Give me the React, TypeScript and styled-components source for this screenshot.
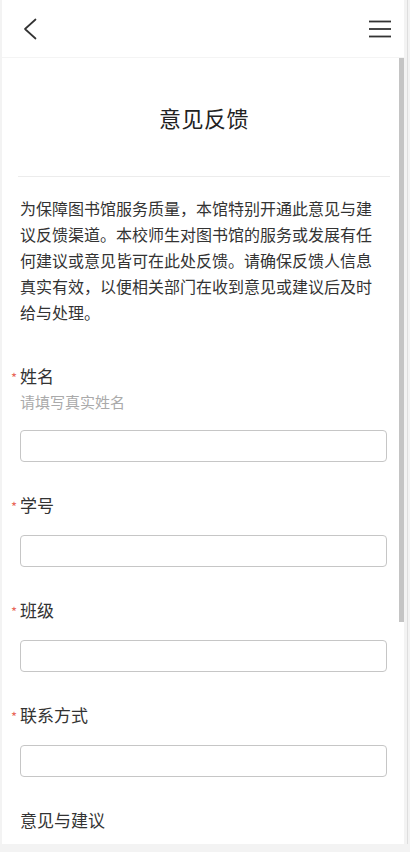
import React from 'react'
import styled, { createGlobalStyle } from 'styled-components'

const GlobalStyle = createGlobalStyle`
    html, body {
        margin: 0;
        padding: 0;
        background: #f3f3f3;
        font-family: "Noto Sans CJK SC", "Noto Sans", sans-serif;
        color: #333;
        overflow: hidden;
    }
    * {
        box-sizing: border-box;
    }
`;

const Frame = styled.div`
    margin-left: 2px;
    width: 402px;
    height: 844px;
    background: #fff;
    display: flex;
    flex-direction: column;
    box-shadow: 3px 0 0 #f3f3f3, 4px 0 0 #dedede;
`;

const TopBar = styled.header`
    height: 58px;
    flex-shrink: 0;
    display: flex;
    align-items: center;
    justify-content: space-between;
    padding: 0 11px 0 15px;
    border-bottom: 1px solid #f4f4f4;
`;

const IconButton = styled.button`
    border: none;
    background: none;
    padding: 0;
    width: 26px;
    height: 26px;
    display: flex;
    align-items: center;
    justify-content: center;
    cursor: pointer;
`;

const Body = styled.div`
    flex: 1;
    min-height: 0;
    display: flex;
`;

const ScrollArea = styled.main`
    flex: 1;
    overflow: hidden;
    padding: 0 12px 0 18px;
`;

const ScrollTrack = styled.div`
    width: 5px;
    flex-shrink: 0;
    background: #fff;
`;

const ScrollThumb = styled.div<{ $size: number }>`
    height: ${({ $size }) => $size}px;
    background: #c4c4c4;
`;

const TitleBlock = styled.div`
    height: 119px;
    margin: 0 -3px 0 -2px;
    display: flex;
    align-items: center;
    justify-content: center;
    border-bottom: 1px solid #ececec;
`;

const Title = styled.h1`
    margin: 0;
    font-size: 22px;
    font-weight: 400;
    color: #222;
    letter-spacing: 0.5px;
`;

const Intro = styled.p`
    margin: 18px 0 0;
    padding-right: 6px;
    font-size: 16px;
    line-height: 26px;
    color: #333;
`;

const Form = styled.form`
    margin-top: 39px;
    padding-bottom: 280px;
`;

const Field = styled.div`
    padding-bottom: 31px;
`;

const Label = styled.label<{ $required?: boolean }>`
    position: relative;
    display: block;
    font-size: 17px;
    line-height: 24px;
    color: #333;

    &::before {
        content: ${({ $required }) => ($required ? '"*"' : 'none')};
        position: absolute;
        left: -9px;
        top: 6px;
        font-size: 13px;
        line-height: 16px;
        color: #e8675a;
    }
`;

const Hint = styled.div`
    margin-top: 4px;
    font-size: 15px;
    line-height: 20px;
    color: #aaa;
`;

const TextInput = styled.input`
    display: block;
    width: 100%;
    height: 32px;
    margin-top: 18px;
    border: 1px solid #c6c6c6;
    border-radius: 4px;
    background: #fff;
    outline: none;
    padding: 0 8px;
    font-size: 15px;
    font-family: inherit;
`;

const TextArea = styled.textarea`
    display: block;
    width: 100%;
    height: 120px;
    margin-top: 18px;
    border: 1px solid #c6c6c6;
    border-radius: 4px;
    resize: none;
    outline: none;
    font-family: inherit;
`;

const BackIcon = () => (
    <svg width="14" height="22" viewBox="0 0 14 22" fill="none">
        <polyline points="12.5,1.5 2,11 12.5,20.5" stroke="#333" strokeWidth="1.7" strokeLinecap="round" strokeLinejoin="round" />
    </svg>
)

const MenuIcon = () => (
    <svg width="24" height="20" viewBox="0 0 24 20" fill="none">
        <line x1="1" y1="2.5" x2="23" y2="2.5" stroke="#333" strokeWidth="1.8" />
        <line x1="1" y1="10" x2="23" y2="10" stroke="#333" strokeWidth="1.8" />
        <line x1="1" y1="17.5" x2="23" y2="17.5" stroke="#333" strokeWidth="1.8" />
    </svg>
)

type FieldItem = {
    label: string
    hint?: string
    required?: boolean
}

const fields: FieldItem[] = [
    { label: '姓名', hint: '请填写真实姓名', required: true },
    { label: '学号', required: true },
    { label: '班级', required: true },
    { label: '联系方式', required: true },
]

const App: React.FC = () => {
    return (
        <>
            <GlobalStyle />
            <Frame>
                <TopBar>
                    <IconButton aria-label="返回"><BackIcon /></IconButton>
                    <IconButton aria-label="菜单"><MenuIcon /></IconButton>
                </TopBar>

                <Body>
                    <ScrollArea>
                        <TitleBlock>
                            <Title>意见反馈</Title>
                        </TitleBlock>

                        <Intro>
                            为保障图书馆服务质量，本馆特别开通此意见与建议反馈渠道。本校师生对图书馆的服务或发展有任何建议或意见皆可在此处反馈。请确保反馈人信息真实有效，以便相关部门在收到意见或建议后及时给与处理。
                        </Intro>

                        <Form onSubmit={(e) => e.preventDefault()}>
                            {fields.map((f) => (
                                <Field key={f.label}>
                                    <Label $required={f.required}>{f.label}</Label>
                                    {f.hint && <Hint>{f.hint}</Hint>}
                                    <TextInput type="text" />
                                </Field>
                            ))}
                            <Field>
                                <Label>意见与建议</Label>
                                <TextArea />
                            </Field>
                        </Form>
                    </ScrollArea>
                    <ScrollTrack>
                        <ScrollThumb $size={564} />
                    </ScrollTrack>
                </Body>
            </Frame>
        </>
    )
}

export default App
